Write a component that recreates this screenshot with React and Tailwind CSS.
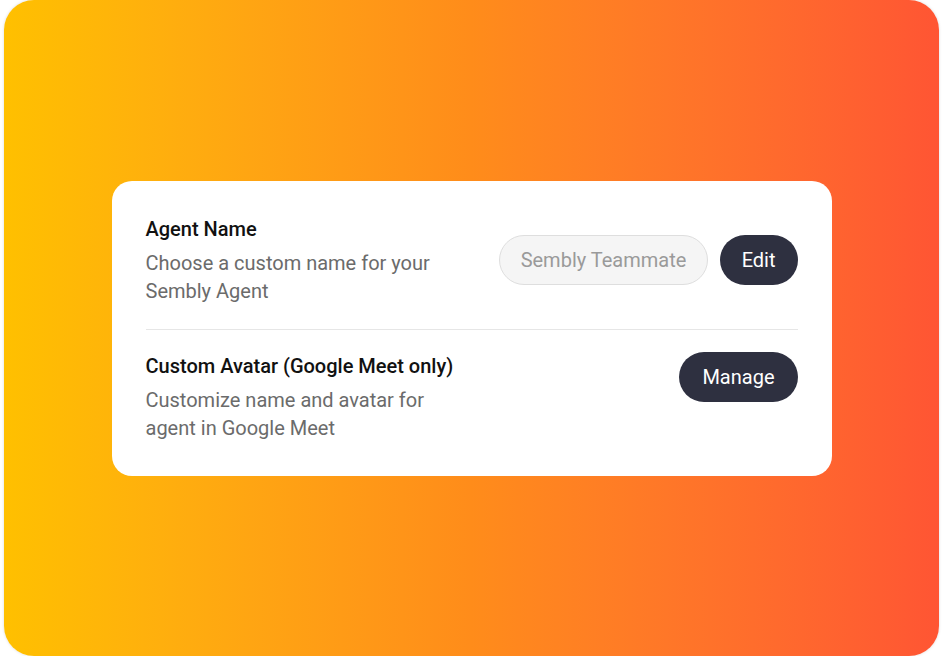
import React from "react";

const SettingRow = ({ title, description, children, align = "items-center" }) => (
  <div className={`flex justify-between ${align}`}>
    <div>
      <h3 className="text-[20px] leading-[28px] font-medium text-[#111111] whitespace-nowrap">{title}</h3>
      <p className="mt-[6px] max-w-[300px] text-[20px] leading-[28px] text-[#6b6b6b]">{description}</p>
    </div>
    <div className="flex items-center gap-3">{children}</div>
  </div>
);

const App = () => {
  return (
    <div
      className="min-h-[656px] bg-white px-1"
      style={{ fontFamily: "Roboto, 'Liberation Sans', sans-serif" }}
    >
      <div className="h-[656px] rounded-[30px] bg-gradient-to-r from-[#ffc000] via-[#ff8c1a] to-[#ff5533] shadow-[0_0_3px_rgba(0,0,0,0.15)] flex items-center justify-center">
        <div className="w-[720px] bg-white rounded-[20px] px-[34px] pt-[34px] pb-[34px]">
          {/* Agent name */}
          <div className="pb-6 border-b border-[#e6e6e6]">
            <SettingRow
              title="Agent Name"
              description="Choose a custom name for your Sembly Agent"
            >
              <input
                type="text"
                placeholder="Sembly Teammate"
                className="w-[209px] h-[50px] rounded-full bg-[#f5f5f5] border border-[#dedede] px-[21px] text-[20px] text-[#333] placeholder:text-[#9a9a9a] outline-none"
              />
              <button className="h-[50px] px-[22px] rounded-full bg-[#2e3040] text-white text-[20px]">
                Edit
              </button>
            </SettingRow>
          </div>

          {/* Custom avatar */}
          <div className="pt-[22px]">
            <SettingRow
              title="Custom Avatar (Google Meet only)"
              description="Customize name and avatar for agent in Google Meet"
              align="items-start"
            >
              <button className="h-[50px] px-[23px] rounded-full bg-[#2e3040] text-white text-[20px]">
                Manage
              </button>
            </SettingRow>
          </div>
        </div>
      </div>
    </div>
  );
};

export default App;
